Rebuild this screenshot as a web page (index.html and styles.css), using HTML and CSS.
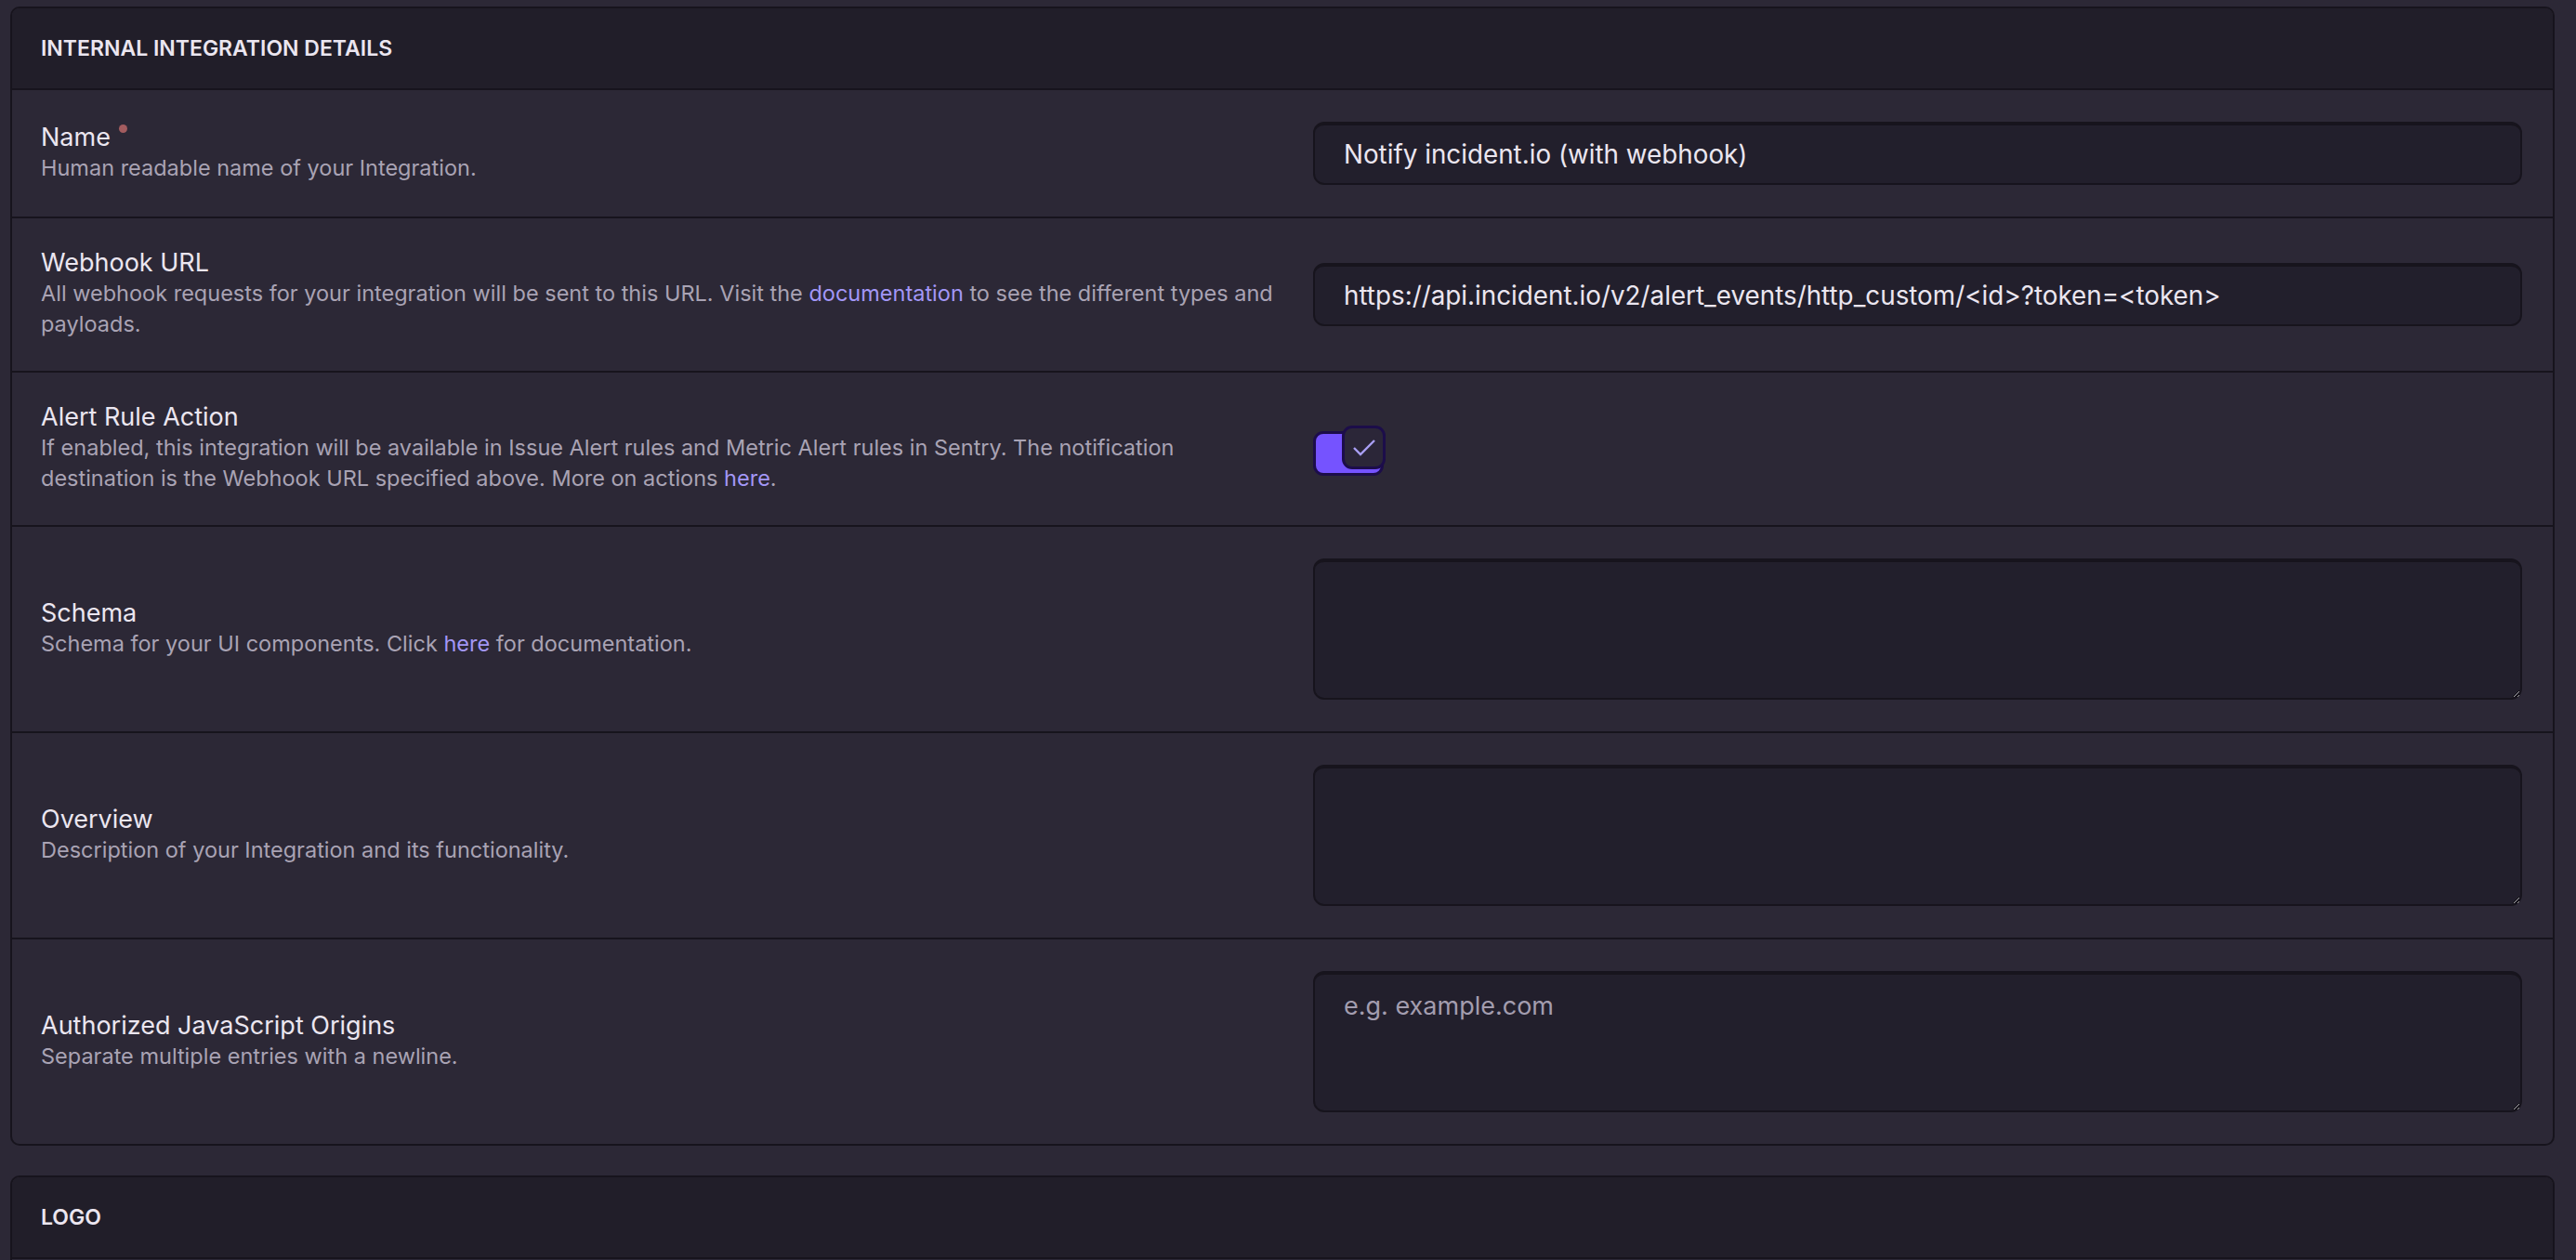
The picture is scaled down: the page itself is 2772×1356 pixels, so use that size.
FILE: index.html
```html
<!DOCTYPE html>
<html lang="en">
<head>
  <meta charset="UTF-8">
  <meta name="viewport" content="width=device-width, initial-scale=1.0">
  <title>Internal Integration Details</title>
  <link rel="stylesheet" href="styles.css">
</head>
<body>
  <div class="panel">
    <div class="panel-header">Internal Integration Details</div>

    <div class="field">
      <div class="field-label">
        <div class="label">Name<span class="required"></span></div>
        <div class="help">Human readable name of your Integration.</div>
      </div>
      <div class="field-control">
        <input type="text" class="input" value="Notify incident.io (with webhook)">
      </div>
    </div>

    <div class="field">
      <div class="field-label">
        <div class="label">Webhook URL</div>
        <div class="help">All webhook requests for your integration will be sent to this URL. Visit the <a href="#">documentation</a> to see the different types and payloads.</div>
      </div>
      <div class="field-control">
        <input type="text" class="input" value="https://api.incident.io/v2/alert_events/http_custom/<id>?token=<token>">
      </div>
    </div>

    <div class="field">
      <div class="field-label">
        <div class="label">Alert Rule Action</div>
        <div class="help">If enabled, this integration will be available in Issue Alert rules and Metric Alert rules in Sentry. The notification destination is the Webhook URL specified above. More on actions <a href="#">here</a>.</div>
      </div>
      <div class="field-control">
        <div class="switch">
          <div class="switch-thumb">
            <svg width="26" height="20" viewBox="0 0 26 20"><path d="M2 10 L9 17 L24 2" fill="none" stroke="#a99ff5" stroke-width="2.4"/></svg>
          </div>
        </div>
      </div>
    </div>

    <div class="field">
      <div class="field-label">
        <div class="label">Schema</div>
        <div class="help">Schema for your UI components. Click <a href="#">here</a> for documentation.</div>
      </div>
      <div class="field-control">
        <textarea class="input textarea"></textarea>
      </div>
    </div>

    <div class="field">
      <div class="field-label">
        <div class="label">Overview</div>
        <div class="help">Description of your Integration and its functionality.</div>
      </div>
      <div class="field-control">
        <textarea class="input textarea"></textarea>
      </div>
    </div>

    <div class="field">
      <div class="field-label">
        <div class="label">Authorized JavaScript Origins</div>
        <div class="help">Separate multiple entries with a newline.</div>
      </div>
      <div class="field-control">
        <textarea class="input textarea" placeholder="e.g. example.com"></textarea>
      </div>
    </div>
  </div>

  <div class="panel">
    <div class="panel-header">Logo</div>
    <div class="field field-empty"></div>
  </div>
</body>
</html>
```

FILE: styles.css
```css
* { box-sizing: border-box; }
body {
  margin: 0;
  padding: 7px 23px 0 11px;
  background: #2c2836;
  color: #ebe6f0;
  font-family: 'Inter', sans-serif;
  overflow: hidden;
}
.panel {
  border: 2px solid #17141d;
  border-radius: 10px;
  background: #2c2836;
  margin-bottom: 32px;
  overflow: hidden;
}
.panel-header {
  height: 88px;
  display: flex;
  align-items: center;
  padding: 0 31px;
  background: #211e29;
  border-bottom: 2px solid #17141d;
  font-size: 23px;
  font-weight: 600;
  text-transform: uppercase;
  color: #ebe6f0;
}
.field {
  display: grid;
  grid-template-columns: 1fr 1fr;
  align-items: center;
  padding: 34px 33px 34px 31px;
  border-bottom: 2px solid #17141d;
}
.field:last-child { border-bottom: none; }
.field-empty { height: 120px; }
.label {
  font-size: 27px;
  line-height: 28px;
  margin-bottom: 2px;
  color: #ebe6f0;
}
.required {
  display: inline-block;
  width: 9px;
  height: 9px;
  border-radius: 50%;
  background: #a35c5f;
  vertical-align: top;
  margin-left: 9px;
}
.help {
  font-size: 23.5px;
  line-height: 33px;
  color: #a9a3b4;
}
.help a {
  color: #a397f7;
  text-decoration: none;
}
.field-control { padding-left: 34px; }
.input {
  display: block;
  width: 100%;
  height: 68px;
  padding: 0 31px;
  background: #221f2c;
  border: 2px solid #17141d;
  border-top-width: 4px;
  border-radius: 12px;
  font-family: inherit;
  font-size: 27.8px;
  color: #ebe6f0;
  outline: none;
}
.textarea {
  height: 152px;
  padding: 18px 31px;
  line-height: 32px;
  font-size: 27px;
  resize: vertical;
}
.textarea::placeholder { color: #a39daf; }
.switch {
  position: relative;
  width: 78px;
  height: 46px;
}
.switch::before {
  content: "";
  position: absolute;
  left: 0;
  top: 4px;
  width: 70px;
  height: 42px;
  background: #7553ff;
  border: 3px solid #1c0d4a;
  border-radius: 11px;
}
.switch-thumb {
  position: absolute;
  right: 0;
  top: -2px;
  width: 47px;
  height: 47px;
  background: #2b2638;
  border: 3px solid #1c0d4a;
  border-radius: 11px;
  display: flex;
  align-items: center;
  justify-content: center;
}
```
